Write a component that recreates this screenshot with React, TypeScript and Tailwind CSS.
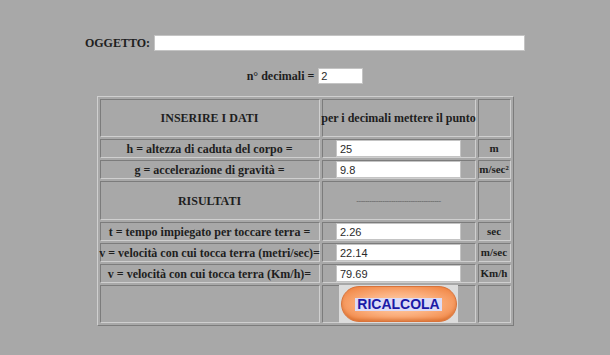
import React from 'react';

const serif = "font-['Liberation_Serif','Times_New_Roman',serif] font-bold text-[#1e1e1e]";
const cell =
  'flex items-center justify-center border border-t-[#7c7c7c] border-l-[#7c7c7c] border-b-[#cfcfcf] border-r-[#cfcfcf] overflow-visible whitespace-nowrap';

const Field: React.FC<{ value: string }> = ({ value }) => (
  <input
    readOnly
    value={value}
    className="w-[125px] h-[17px] bg-white border border-[#c4c4c4] px-[3px] text-[11px] font-normal text-[#2a2a2a] font-['Liberation_Sans',Arial,sans-serif] outline-none"
  />
);

const rows = [
  { label: 'h = altezza di caduta del corpo =', value: '25', unit: 'm' },
  { label: 'g = accelerazione di gravità =', value: '9.8', unit: 'm/sec²' },
];

const results = [
  { label: 't = tempo impiegato per toccare terra =', value: '2.26', unit: 'sec' },
  { label: 'v = velocità con cui tocca terra (metri/sec)=', value: '22.14', unit: 'm/sec' },
  { label: 'v = velocità con cui tocca terra (Km/h)=', value: '79.69', unit: 'Km/h' },
];

export default function App() {
  return (
    <div className="min-h-screen w-full bg-[#a8a8a8] flex flex-col items-center pt-[35px]">
      <div className="flex items-center gap-[4px] h-[16px]">
        <span className={`${serif} text-[12px]`}>OGGETTO:</span>
        <input
          readOnly
          className="w-[371px] h-[16px] bg-white border border-[#c4c4c4] outline-none"
        />
      </div>

      <div className="flex items-center gap-[4px] h-[16px] mt-[17px]">
        <span className={`${serif} text-[12px]`}>n° decimali =</span>
        <input
          readOnly
          value="2"
          className="w-[45px] h-[16px] bg-white border border-[#c4c4c4] px-[2px] text-[11px] font-normal text-[#2a2a2a] font-['Liberation_Sans',Arial,sans-serif] outline-none"
        />
      </div>

      <div
        className={`mt-[12px] grid grid-cols-[220px_154px_33px] grid-rows-[38px_19px_19px_39px_19px_19px_19px_38px] gap-[2px] p-[2px] border border-t-[#cfcfcf] border-l-[#cfcfcf] border-b-[#7c7c7c] border-r-[#7c7c7c] ${serif} text-[12px]`}
      >
        <div className={cell}>INSERIRE I DATI</div>
        <div className={cell}>per i decimali mettere il punto</div>
        <div className={cell}></div>

        {rows.map((r) => (
          <React.Fragment key={r.label}>
            <div className={cell}>{r.label}</div>
            <div className={cell}>
              <Field value={r.value} />
            </div>
            <div className={`${cell} text-[11px]`}>{r.unit}</div>
          </React.Fragment>
        ))}

        <div className={cell}>RISULTATI</div>
        <div className={cell}>
          <span className="font-['Liberation_Sans',Arial,sans-serif] font-normal text-[8px] text-[#5a5a5a] tracking-[-0.5px]">
            ---------------------------------------
          </span>
        </div>
        <div className={cell}></div>

        {results.map((r) => (
          <React.Fragment key={r.label}>
            <div className={cell}>{r.label}</div>
            <div className={cell}>
              <Field value={r.value} />
            </div>
            <div className={`${cell} text-[11px]`}>{r.unit}</div>
          </React.Fragment>
        ))}

        <div className={cell}></div>
        <div className={cell}>
          <div className="w-[119px] h-[38px] bg-[#dcdcdc] flex items-center justify-center">
            <div className="w-[116px] h-[36px] rounded-full border border-[#d8733a] bg-[radial-gradient(ellipse_at_center,#ffd3b0_0%,#fbb07f_45%,#f28a4a_85%,#e77636_100%)] flex items-center justify-center shadow-[inset_0_-2px_3px_rgba(180,80,20,0.35)]">
              <span className="bg-[#dcdcf6] px-[2px] leading-[13px] font-['Liberation_Sans',Arial,sans-serif] font-bold text-[14px] text-[#1a1aa6]">
                RICALCOLA
              </span>
            </div>
          </div>
        </div>
        <div className={cell}></div>
      </div>
    </div>
  );
}
